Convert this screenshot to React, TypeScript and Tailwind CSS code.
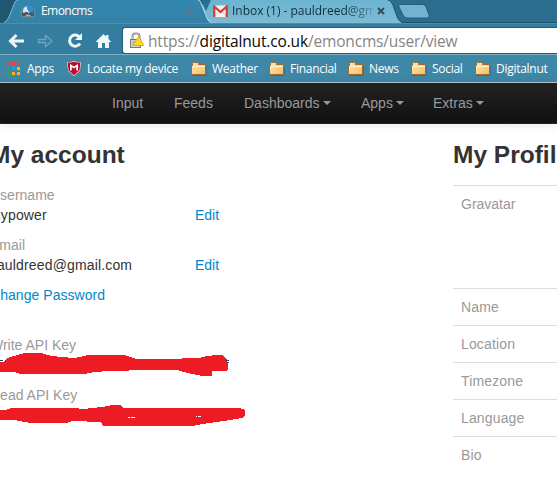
import React from "react";

const chromeFont = "font-['Open_Sans','Noto_Sans',sans-serif]";

function Gauge() {
  return (
    <svg width="16" height="14" viewBox="0 0 16 14">
      <path d="M2.500 13A6.800 6.800 0 1 1 13.500 13L11.500 12.500Q8 9 4.500 12.500Z" fill="#4b545b" stroke="#7e929e" />
      <path d="M3 9A5 5 0 0 1 7 2.400L8 7.500Z" fill="#b9e4fb" />
      <path d="M7 2.400A5 5 0 0 1 13 9L8 8Z" fill="#2c8ee0" />
      <path d="M5 3.500L9 9" stroke="#eaf8ff" strokeWidth="1.200" />
      <path d="M5 12.500Q8 8.500 11 12.500Z" fill="#c5a18d" />
    </svg>
  );
}

function Gmail() {
  return (
    <svg width="15" height="12" viewBox="0 0 15 12">
      <rect x="0" y="0.500" width="15" height="11.500" rx="1" fill="#f6f4f2" />
      <path d="M2 11L6 6.500M13 11L9 6.500" stroke="#d5cfcc" />
      <path d="M1.200 12V1.500L7.500 7L13.800 1.500V12" fill="none" stroke="#da3c33" strokeWidth="2.300" />
    </svg>
  );
}

function Folder() {
  return (
    <svg width="16" height="14" viewBox="0 0 16 14" className="shrink-0">
      <defs>
        <linearGradient id="folder" x1="0" y1="0" x2="1" y2="1">
          <stop offset="0" stopColor="#ffe9b5" />
          <stop offset="1" stopColor="#f5bd67" />
        </linearGradient>
      </defs>
      <path d="M1 13.500H15.500V4" fill="none" stroke="#2d667e" opacity=".6" />
      <path d="M.5 12.500V3.500H1.500V1.500Q1.500.500 2.500.500H6.500Q7.500.500 7.500 1.500V2.500H14.500V12.500Z" fill="url(#folder)" stroke="#a06b2c" />
      <path d="M1.500 4.500H13.500" stroke="#fff0c8" />
    </svg>
  );
}

function Apps() {
  const colors = ["#f4403c", "#f4403c", "#f4403c", "#2fa25a", "#2d93f5", "#f9b418", "#2fa25a", "#f9b418", "#f9b418"];
  return (
    <svg width="13" height="13" viewBox="0 0 13 13" className="shrink-0">
      {colors.map((c, i) => (
        <rect key={i} x={(i % 3) * 5} y={Math.floor(i / 3) * 5} width="3" height="3" fill={c} />
      ))}
    </svg>
  );
}

function Shield() {
  return (
    <svg width="16" height="17" viewBox="0 0 16 17" className="shrink-0">
      <path d="M.5 1.500H4.500L8 .5L11.500 1.500H15.500L14.500 11L8 16.500L1.500 11Z" fill="#f0e9eb" stroke="#55646d" strokeWidth=".8" />
      <path d="M1.700 2.600H5L8 1.700L11 2.600H14.300L13.500 10.500L8 15.200L2.500 10.500Z" fill="#b40c32" />
      <path d="M4 11V4L8 6.500L12 4V11L10.200 10V7L8 8.500L5.800 7V10Z" fill="#fff" />
    </svg>
  );
}

function TabStrip() {
  return (
    <div className="relative h-[23px] w-full overflow-hidden bg-linear-to-r from-[#20566f] via-[#2a6d8d] to-[#2c6e8f]">
      <svg width="557" height="23" className="absolute inset-0">
        <defs>
          <linearGradient id="tab" x2="0" y2="1">
            <stop offset="0" stopColor="#3286ad" />
            <stop offset="1" stopColor="#3582a7" />
          </linearGradient>
          <linearGradient id="idle" x2="0" y2="1">
            <stop offset="0" stopColor="#6ab4d0" />
            <stop offset="1" stopColor="#7dbbd4" />
          </linearGradient>
        </defs>
        <path d="M194 23L202 5Q205 0 208 0H388Q391 0 393 5L398 19Q400 22 403 23Z" fill="url(#idle)" />
        <path d="M388 0Q391 0 393 5L398 19Q400 22 403 22.500H557" fill="none" stroke="#1c516c" />
        <path d="M0 23Q7 23 9 17L15 2Q16 0 18 0H197Q200 0 202 5L207 19Q209 23 212 23Z" fill="url(#tab)" />
        <path d="M4 22.500Q7 22 9 17L15 2Q16 0 18 0" fill="none" stroke="#82b8cf" />
        <path d="M198 0L200 1L207 18Q209 22 212 23" fill="none" stroke="#b2dae7" />
        <path d="M201 0L206 11L211 0Z" fill="#286e90" />
        <path d="M400 4.500H423Q425 4.500 426 7L429 15Q430 18 427 18H407Q404 18 403 15L399 7Q398 4.500 400 4.500Z" fill="#72b3cf" stroke="#255c76" />
        <path d="M186 8.500L192 14.500M192 8.500L186 14.500" stroke="#637988" strokeWidth="1.700" />
        <path d="M378 8L384 14M384 8L378 14" stroke="#344b58" strokeWidth="1.900" />
      </svg>
      <div className="relative flex h-[22px] items-center pl-[20px]">
        <Gauge />
        <span className="ml-[5px] w-[172px] text-[12px] tracking-[-0.55px] text-white">Emoncms</span>
        <Gmail />
        <span className="ml-[4px] w-[141px] overflow-hidden bg-linear-to-r from-[#102d3c] from-80% to-[#102d3c]/20 bg-clip-text text-[12px] tracking-[-0.02px] whitespace-nowrap text-transparent">Inbox (1) - pauldreed@gm</span>
      </div>
    </div>
  );
}

function Toolbar() {
  return (
    <div className="flex h-[31px] items-start border-t border-[#4790b2] bg-[#347d9f] pt-[3px]">
      <svg width="122" height="26" viewBox="0 27 122 26" className="shrink-0">
        <g fill="none" strokeWidth="3">
          <path d="M24 41H11M16.500 35L10.500 41L16.500 47" stroke="#eff7fa" />
          <path d="M38.500 39.500H45.500V35.500L52 41L45.500 46.500V42.500H38.500Z" stroke="#71a5bd" strokeWidth="1.300" />
          <path d="M79.500 37A5.600 5.600 0 1 0 80 43.500" stroke="#eff7fa" />
        </g>
        <path d="M82 33V40H75Z" fill="#eff7fa" />
        <path d="M96 41.500L103.500 34L106 36.500V35H108.500V39L111 41.500V42H109V48H105V43H102V48H98V42H96Z" fill="#eff7fa" />
      </svg>
      <div className="flex h-[27px] flex-1 items-center rounded-l-[3px] border border-r-0 border-[#245d78] bg-white pl-[6px]">
        <svg width="16" height="18" viewBox="0 0 16 18">
          <path d="M3.500 8V4.500Q3.500 1.500 7 1.500Q10.500 1.500 10.500 4.500V8" fill="none" stroke="#777" strokeWidth="2" />
          <path d="M3.500 8V4.500Q3.500 1.500 7 1.500Q10.500 1.500 10.500 4.500V8" fill="none" stroke="#ddd" strokeWidth=".8" />
          <rect x="1.500" y="7.500" width="10" height="8" fill="#d4d4d4" stroke="#777" />
          <path d="M3 10H8M3 12.500H7" stroke="#999" />
          <path d="M9.500 4.500L14.500 12.500Q15 13.500 14 13.500H5Q4 13.500 4.500 12.500Z" fill="#ffd91c" stroke="#d8a008" strokeWidth=".8" />
        </svg>
        <span className="ml-[3px] text-[15.500px] leading-[22px] tracking-[-0.16px] whitespace-nowrap text-[#858585]">
          https://<span className="text-[#080808]">digitalnut.co.uk</span>/emoncms/user/view
        </span>
      </div>
    </div>
  );
}

function Bookmark({ name, width }: { name: string; width: number }) {
  return (
    <div className="flex shrink-0 items-center gap-[5px]" style={{ width }}>
      <Folder />
      <span className="tracking-[-0.28px]">{name}</span>
    </div>
  );
}

function BookmarksBar() {
  return (
    <div className="flex h-[29px] items-center border-t border-b border-t-[#7db2c7] border-b-[#b9c6cb] bg-[#3e87a7] pl-[7px] text-[12px] whitespace-nowrap text-white">
      <Apps />
      <span className="ml-[7px] w-[39px] shrink-0 tracking-[-0.25px]">Apps</span>
      <Shield />
      <span className="ml-[5px] w-[104px] shrink-0 tracking-[-0.3px]">Locate my device</span>
      <Bookmark name="Weather" width={78} />
      <Bookmark name="Financial" width={79} />
      <Bookmark name="News" width={63} />
      <Bookmark name="Social" width={64} />
      <Bookmark name="Digitalnut" width={82} />
    </div>
  );
}

function NavItem({ label, width, menu = false }: { label: string; width: number; menu?: boolean }) {
  return (
    <div className="flex shrink-0 items-center" style={{ width }}>
      {label}
      {menu && <span className="ml-[3px] h-0 w-0 border-x-4 border-t-4 border-x-transparent border-t-[#999]" />}
    </div>
  );
}

function Field({ label, value, className }: { label: string; value: string; className: string }) {
  return (
    <div className={className}>
      <div className="text-[#999]">{label}</div>
      <div className="flex">
        <div className="-ml-px w-[206px] tracking-[0.15px]">{value}</div>
        <a className="text-[#0088cc]">Edit</a>
      </div>
    </div>
  );
}

function Account() {
  return (
    <section className="-ml-[10px] w-[463px] shrink-0">
      <h3 className="mt-[11px] h-[40px] text-[24.500px] leading-[40px] font-bold">My account</h3>
      <Field className="mt-[10px]" label="Username" value="mypower" />
      <Field className="mt-[10px]" label="Email" value="pauldreed@gmail.com" />
      <div className="mt-[10px] tracking-[0.05px] text-[#0088cc]">Change Password</div>
      <div className="mt-[30px] text-[#999]">Write API Key</div>
      <svg width="250" height="30" viewBox="-10 355 250 30" className="block overflow-visible" shapeRendering="crispEdges">
        <path d="M-10 362H3L7 358L14 356L25 353H41L52 356L73 358L80 357L88 355H124L130 357L136 359H164L199 358L207 356L216 355H222L226 358L228 363V370L226 371H212V376H202L188 373L177 370H148L110 371L94 372L84 374H20L14 372H0Z" fill="#ed1c24" />
        <path d="M0 360.500H3M226 360.500H229M228 362.500H229" stroke="#174674" />
      </svg>
      <div className="text-[#999]">Read API Key</div>
      <svg width="257" height="30" viewBox="-10 405 257 30" className="block" shapeRendering="crispEdges">
        <path d="M-10 410H5L11 408H75L83 409L102 407L112 405H120L124 408H240L245 410V416L242 418L230 420L209 423L192 426H103L101 422L73 421L66 423H31L14 420H-10Z" fill="#ed1c24" />
        <path d="M128 417.500H135M196 416.500H201" stroke="#fff" />
        <path d="M130 417.500H131M135 417.500H136M197 416.500H198" stroke="#3972b6" />
      </svg>
    </section>
  );
}

function Profile() {
  return (
    <section className="w-[260px] shrink-0">
      <h3 className="mt-[11px] h-[40px] text-[24.500px] leading-[40px] font-bold">My Profile</h3>
      <div className="mt-[10px] text-[#999]">
        <div className="h-[103px] border-t border-[#ddd] p-2">Gravatar</div>
        {["Name", "Location", "Timezone", "Language", "Bio"].map((row) => (
          <div key={row} className="h-[37px] border-t border-[#ddd] p-2 tracking-[0.15px]">{row}</div>
        ))}
      </div>
    </section>
  );
}

export default function App() {
  return (
    <div className="h-[498px] w-[557px] overflow-hidden bg-white font-['Liberation_Sans',Arial,sans-serif] text-[14px] leading-5 text-[#333]">
      <header className={chromeFont}>
        <TabStrip />
        <Toolbar />
        <BookmarksBar />
      </header>
      <nav className="flex h-[41px] items-center border-b border-[#252525] bg-linear-to-b from-[#222] to-[#111] pl-[112px] text-[#999] shadow-[0_1px_10px_rgba(0,0,0,0.1)]">
        <NavItem label="Input" width={62} />
        <NavItem label="Feeds" width={70} />
        <NavItem label="Dashboards" width={117} menu />
        <NavItem label="Apps" width={72} menu />
        <NavItem label="Extras" width={70} menu />
      </nav>
      <main className="flex">
        <Account />
        <Profile />
      </main>
    </div>
  );
}
